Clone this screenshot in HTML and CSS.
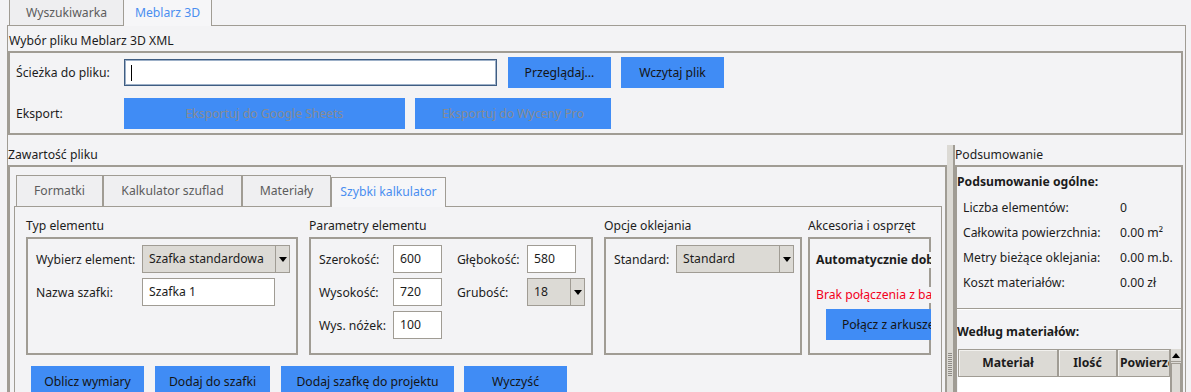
FILE: index.html
```html
<!DOCTYPE html>
<html lang="pl">
<head>
<meta charset="utf-8">
<title>Meblarz 3D</title>
<link rel="stylesheet" href="styles.css">
</head>
<body>
<div class="app">
  <div class="tabbar">
    <div class="tab">Wyszukiwarka</div>
    <div class="tab active">Meblarz 3D</div>
  </div>
  <div class="pane">
    <div class="lf-label top-label">Wybór pliku Meblarz 3D XML</div>
    <div class="box file-box">
      <div class="frow">
        <span class="flabel">Ścieżka do pliku:</span>
        <div class="entry path-entry"><span class="caret"></span></div>
        <button class="btn w103 ml11">Przeglądaj...</button>
        <button class="btn w103 ml10">Wczytaj plik</button>
      </div>
      <div class="frow">
        <span class="flabel">Eksport:</span>
        <button class="btn disabled w281">Eksportuj do Google Sheets</button>
        <button class="btn disabled w196 ml10">Eksportuj do Wyceny Pro</button>
      </div>
    </div>
    <div class="paned">
      <div class="left-pane">
        <div class="lf-label pane-label">Zawartość pliku</div>
        <div class="box left-box">
          <div class="nb-tabs">
            <div class="itab w87">Formatki</div>
            <div class="itab w139">Kalkulator szuflad</div>
            <div class="itab w89">Materiały</div>
            <div class="itab active w115">Szybki kalkulator</div>
          </div>
          <div class="nb-body">
            <div class="groups">
              <div class="group">
                <div class="glabel">Typ elementu</div>
                <div class="box gbox typ">
                  <div class="grid typ-grid">
                    <span>Wybierz element:</span>
                    <div class="combo w148"><span class="cval">Szafka standardowa</span><span class="carrow"></span></div>
                    <span>Nazwa szafki:</span>
                    <div class="entry small w133">Szafka 1</div>
                  </div>
                </div>
              </div>
              <div class="group">
                <div class="glabel">Parametry elementu</div>
                <div class="box gbox par">
                  <div class="grid par-grid">
                    <span>Szerokość:</span>
                    <div class="entry small w49">600</div>
                    <span class="pl15">Głębokość:</span>
                    <div class="entry small w49">580</div>
                    <span>Wysokość:</span>
                    <div class="entry small w49">720</div>
                    <span class="pl15">Grubość:</span>
                    <div class="combo w58"><span class="cval">18</span><span class="carrow"></span></div>
                    <span>Wys. nóżek:</span>
                    <div class="entry small w49">100</div>
                  </div>
                </div>
              </div>
              <div class="group">
                <div class="glabel">Opcje oklejania</div>
                <div class="box gbox opc">
                  <div class="grid opc-grid">
                    <span>Standard:</span>
                    <div class="combo w118"><span class="cval">Standard</span><span class="carrow"></span></div>
                  </div>
                </div>
              </div>
              <div class="group acc-wrap">
                <div class="glabel">Akcesoria i osprzęt</div>
                <div class="box gbox acc">
                  <div class="acc-line bold">Automatycznie dobrane akcesoria</div>
                  <div class="acc-line red">Brak połączenia z bazą akcesoriów</div>
                  <div class="acc-btn-row"><button class="btn acc-btn">Połącz z arkuszem</button></div>
                </div>
              </div>
            </div>
            <div class="actions">
              <button class="btn w113">Oblicz wymiary</button>
              <button class="btn w115">Dodaj do szafki</button>
              <button class="btn w173">Dodaj szafkę do projektu</button>
              <button class="btn w103b">Wyczyść</button>
            </div>
          </div>
        </div>
      </div>
      <div class="sash"><div class="grip"></div></div>
      <div class="right-pane">
        <div class="lf-label pane-label">Podsumowanie</div>
        <div class="box right-box">
          <div class="sum-title">Podsumowanie ogólne:</div>
          <div class="stats">
            <div class="srow"><span class="sk">Liczba elementów:</span><span class="sv">0</span></div>
            <div class="srow"><span class="sk">Całkowita powierzchnia:</span><span class="sv">0.00 m²</span></div>
            <div class="srow"><span class="sk">Metry bieżące oklejania:</span><span class="sv">0.00 m.b.</span></div>
            <div class="srow"><span class="sk">Koszt materiałów:</span><span class="sv">0.00 zł</span></div>
          </div>
          <div class="sep"></div>
          <div class="sum-title second">Według materiałów:</div>
          <div class="table-wrap">
            <div class="table">
              <div class="thead">
                <div class="th c1">Materiał</div>
                <div class="th c2">Ilość</div>
                <div class="th c3">Powierzchnia</div>
              </div>
              <div class="tbody"></div>
            </div>
            <div class="vscroll"><div class="sarrow"></div><div class="sthumb"></div></div>
          </div>
        </div>
      </div>
    </div>
  </div>
</div>
</body>
</html>
```

FILE: styles.css
```css
* { box-sizing: border-box; }
html, body { margin: 0; padding: 0; }
body {
  background: #f3f3f5;
  font-family: "Noto Sans", "Open Sans", sans-serif;
  font-size: 12.2px;
  color: #1c1c1c;
  width: 1191px;
  height: 392px;
  overflow: hidden;
}
button {
  font-family: inherit;
  font-size: inherit;
  border: 0;
  margin: 0;
  padding: 0;
  cursor: default;
}
.app { width: 1191px; height: 392px; }

/* top tabs */
.tabbar {
  height: 25px;
  padding-left: 9px;
  display: flex;
  align-items: flex-start;
}
.tab {
  height: 26px;
  margin-top: -1px;
  border: 1px solid #a09c94;
  border-bottom: 0;
  background: #eeeef0;
  color: #5c5c5c;
  display: flex;
  align-items: center;
  justify-content: center;
  padding-bottom: 1px;
}
.tab:first-child { width: 114px; border-right: 0; }
.tab.active {
  width: 89px;
  height: 27px;
  background: #f6f6f8;
  color: #4a8ef0;
  position: relative;
  z-index: 2;
}

.pane {
  margin-left: 7px;
  width: 1179px;
  height: 367px;
  border: 1px solid #a09c94;
  border-bottom: 0;
}

.lf-label { line-height: 16px; white-space: nowrap; }
.top-label { height: 25px; padding-top: 7px; padding-left: 1px; }
.pane-label { height: 20px; padding-top: 2px; line-height: 16px; }

.box { border: 2px solid #a09c94; }

.file-box {
  width: 1175px;
  height: 84px;
  padding: 4px 0 4px 6px;
  display: flex;
  flex-direction: column;
  gap: 10px;
}
.frow { display: flex; align-items: center; height: 31px; }
.flabel { width: 108px; flex: none; white-space: nowrap; }

.btn {
  height: 31px;
  background: #408cf5;
  color: #141414;
  flex: none;
  white-space: nowrap;
  overflow: hidden;
}
.btn.disabled { color: #878b92; }
.w103 { width: 103px; }
.w281 { width: 281px; }
.w196 { width: 196px; }
.w113 { width: 113px; }
.w115 { width: 115px; }
.w173 { width: 173px; }
.w103b { width: 103px; }
.ml10 { margin-left: 10px; }
.ml11 { margin-left: 11px; }

.entry {
  background: #fff;
  border: 1px solid #a09c94;
  flex: none;
}
.path-entry {
  width: 373px;
  height: 27px;
  border: 1px solid #3f5d82;
  box-shadow: inset 0 0 0 1px #9db0c8;
  padding: 5px 0 0 6px;
}
.caret {
  display: block;
  width: 1px;
  height: 16px;
  background: #000;
}
.entry.small {
  height: 28px;
  line-height: 26px;
  padding-left: 6px;
  white-space: nowrap;
}
.w133 { width: 133px; }
.w49 { width: 49px; }

.combo {
  height: 28px;
  background: #dcdad5;
  border: 1px solid #a09c94;
  display: flex;
  align-items: stretch;
}
.w148 { width: 148px; }
.w58 { width: 58px; }
.w118 { width: 118px; }
.cval {
  flex: 1;
  line-height: 26px;
  padding-left: 6px;
  white-space: nowrap;
  overflow: hidden;
}
.carrow {
  width: 14px;
  flex: none;
  border-left: 1px solid #a09c94;
  display: flex;
  align-items: center;
  justify-content: center;
}
.carrow::before {
  content: "";
  width: 0;
  height: 0;
  border-left: 4.5px solid transparent;
  border-right: 4.5px solid transparent;
  border-top: 5px solid #000;
  margin-left: 1px;
}

/* paned area */
.paned {
  margin-top: 10px;
  display: flex;
  height: 247px;
}
.left-pane { width: 939px; flex: none; }
.left-box {
  height: 227px;
  border-bottom: 0;
  padding-top: 8px;
}
.nb-tabs {
  display: flex;
  align-items: flex-end;
  height: 31px;
  padding-left: 6px;
}
.itab {
  height: 31px;
  border: 1px solid #a09c94;
  border-bottom: 0;
  color: #5c5c5c;
  background: #efeff1;
  display: flex;
  align-items: center;
  justify-content: center;
  padding-bottom: 2px;
  flex: none;
  white-space: nowrap;
}
.itab.active {
  height: 30px;
  margin-bottom: -1px;
  background: #f6f6f8;
  color: #4a8ef0;
  position: relative;
  z-index: 2;
}
.w87 { width: 87px; }
.w139 { width: 139px; }
.w89 { width: 89px; }
.w115 { width: 115px; }

.nb-body {
  margin-left: 4px;
  width: 928px;
  height: 190px;
  border: 1px solid #a09c94;
  border-bottom: 0;
  padding-left: 11px;
}
.groups { display: flex; }
.group + .group { margin-left: 11px; }
.group.acc-wrap { margin-left: 6px; width: 123px; overflow: hidden; }
.glabel {
  height: 30px;
  padding-top: 11px;
  line-height: 16px;
  white-space: nowrap;
}
.gbox { height: 118px; padding: 6px 0 0 8px; }
.typ { width: 272px; }
.par { width: 284px; }
.opc { width: 198px; }
.acc { width: 123px; padding: 13px 0 0 0; }

.grid { display: grid; row-gap: 5px; align-items: center; white-space: nowrap; }
.typ-grid { grid-template-columns: 106px auto; }
.par-grid { grid-template-columns: 74px 49px 85px auto; grid-auto-rows: 28px; }
.pl15 { padding-left: 15px; }
.opc-grid { grid-template-columns: 62px auto; }

.acc-line {
  width: 300px;
  line-height: 16px;
  padding-left: 6px;
  white-space: nowrap;
  background: #f3f3f5;
}
.acc-line.bold { font-weight: bold; }
.acc-line.red { color: #f2001b; margin-top: 19px; }
.acc-btn-row {
  width: 300px;
  margin-top: 6px;
  padding-left: 16px;
}
.acc-btn { width: 130px; text-align: left; padding-left: 16px; }

.actions {
  margin-top: 11px;
  padding-left: 5px;
  display: flex;
  gap: 11px;
}
.actions .btn:last-child { margin-left: -1px; }

/* sash */
.sash {
  width: 8px;
  flex: none;
  background: #dcdad5;
  border-right: 2px solid #a09c94;
  padding-top: 208px;
}
.grip {
  width: 4px;
  height: 23px;
  margin-left: 1px;
  background: repeating-linear-gradient(#8f8c86 0 1px, transparent 1px 2px);
}

/* right pane */
.right-pane { width: 230px; flex: none; }
.right-box {
  width: 228px;
  height: 227px;
  border-bottom: 0;
  overflow: hidden;
}
.sum-title {
  font-weight: bold;
  line-height: 16px;
  margin-top: 7px;
  white-space: nowrap;
}
.sum-title.second { margin-top: 14px; }
.stats { margin-top: 5px; }
.srow { display: flex; height: 25px; align-items: center; padding-left: 6px; white-space: nowrap; }
.sk { width: 157px; flex: none; }
.sep {
  margin-top: 13px;
  height: 2px;
  border-top: 1px solid #a09c94;
  border-bottom: 1px solid #ffffff;
}
.table-wrap { margin-top: 9px; display: flex; padding-left: 1px; }
.table { width: 212px; flex: none; }
.thead { display: flex; height: 28px; }
.th {
  background: #dcdad5;
  border: 1px solid #a09c94;
  box-shadow: inset 1px 1px 0 #f2f1ee;
  font-weight: bold;
  line-height: 26px;
  text-align: center;
  white-space: nowrap;
  overflow: hidden;
  flex: none;
}
.th.c1 { width: 100px; }
.th.c2 { width: 59px; }
.th.c3 { width: 53px; text-align: left; padding-left: 2px; }
.tbody { height: 40px; background: #fff; }
.vscroll {
  width: 11px;
  height: 60px;
  background: #dcdad5;
  border-left: 1px solid #a09c94;
}
.sarrow {
  height: 13px;
  border-bottom: 1px solid #a09c94;
  display: flex;
  align-items: center;
  justify-content: center;
}
.sarrow::before {
  content: "";
  border-left: 4px solid transparent;
  border-right: 4px solid transparent;
  border-bottom: 5px solid #000;
}
.sthumb {
  margin: 1px 0 0 0;
  height: 40px;
  border: 1px solid #a09c94;
  border-bottom: 0;
}
```
